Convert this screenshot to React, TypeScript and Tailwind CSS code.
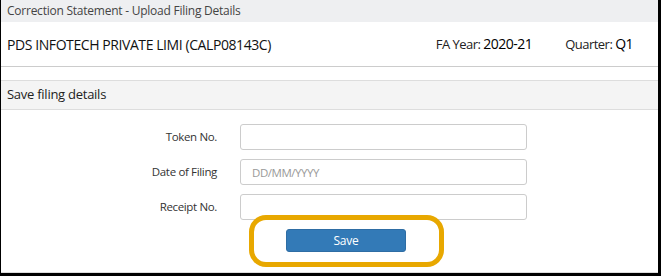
export default function App() {
  return (
    <div className="w-[661px] h-[276px] bg-white border-l border-r-[3px] border-b-[3px] border-black font-['Open_Sans',sans-serif] text-[#333] overflow-hidden">
      <div className="relative h-[273px] border-b border-[#ddd]">
        {/* Page title */}
        <div className="h-[22px] bg-[#eeeff1] px-[6px] flex items-center text-[12px] tracking-[-0.02em] text-[#444]">
          Correction Statement - Upload Filing Details
        </div>

        {/* Company info */}
        <div className="h-[45px] flex items-center justify-between pl-[6px] pr-[25px] border-b border-[#ccc]">
          <span className="text-[14px] tracking-[-0.03em] text-[#111]">PDS INFOTECH PRIVATE LIMI (CALP08143C)</span>
          <div className="flex items-center gap-[33px] text-[13px] tracking-[-0.04em] text-[#222]">
            <span>
              FA Year: <span className="text-[14px] font-medium text-black">2020-21</span>
            </span>
            <span>
              Quarter: <span className="text-[14px] font-medium text-black">Q1</span>
            </span>
          </div>
        </div>

        <div className="h-[13px]" />

        {/* Section header */}
        <div className="h-[30px] bg-[#f4f4f4] border-y border-[#ddd] px-[6px] flex items-center text-[13px] tracking-[-0.02em] text-[#222]">
          Save filing details
        </div>

        {/* Form */}
        <div className="pt-[14px] flex flex-col gap-[9px]">
          <FormRow label="Token No." />
          <FormRow label="Date of Filing" placeholder="DD/MM/YYYY" />
          <FormRow label="Receipt No." />
        </div>
        <div className="pl-[285px] pt-[9px]">
          <button className="w-[120px] h-[23px] bg-[#337ab7] border border-[#2e6da4] rounded-[3px] text-white text-[12px] tracking-[-0.02em] flex items-center justify-center">
            Save
          </button>
        </div>

        {/* highlight annotation */}
        <div className="absolute left-[248px] top-[215px] w-[195px] h-[52px] border-[5px] border-[#e8a800] rounded-[17px] pointer-events-none" />
      </div>
    </div>
  );
}

function FormRow({ label, placeholder }: { label: string; placeholder?: string }) {
  return (
    <div className="flex items-center">
      <label className="w-[216px] text-right text-[11.5px] tracking-[-0.03em] text-[#333]">{label}</label>
      <input
        className="ml-[23px] w-[287px] h-[26px] border border-[#ccc] rounded-[3px] px-[11px] text-[11.5px] tracking-[-0.04em] placeholder:text-[#999] outline-none"
        placeholder={placeholder}
      />
    </div>
  );
}
